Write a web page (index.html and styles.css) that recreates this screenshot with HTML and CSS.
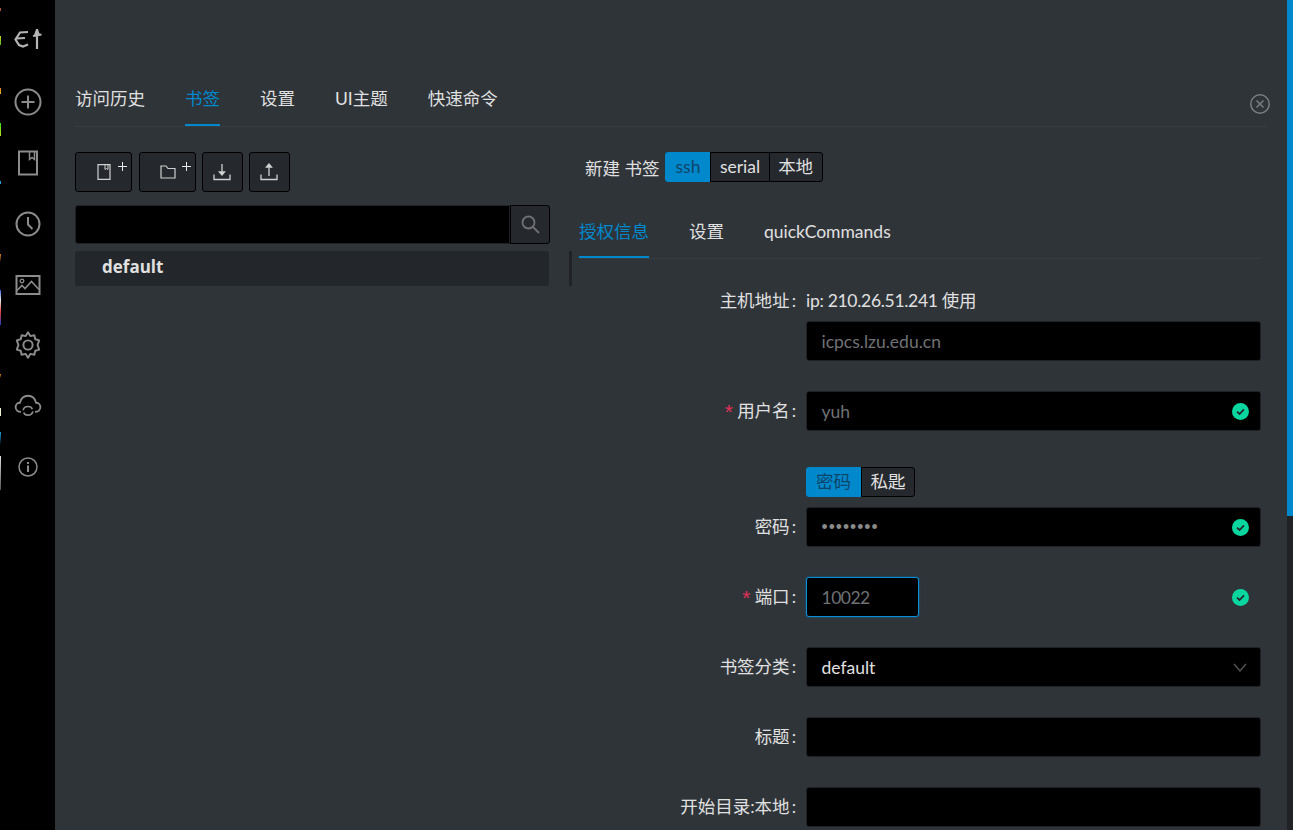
FILE: index.html
```html
<!DOCTYPE html>
<html lang="zh-CN">
<head>
    <meta charset="UTF-8">
    <title>electerm</title>
    <link rel="stylesheet" href="styles.css">
</head>
<body>
    <nav class="sidebar">
        <div class="side-item side-logo">
            <svg width="28" height="20" viewBox="0 0 28 20" fill="none" stroke="#b4b4b4" stroke-width="2.200"><path d="M14 3 6 3.500 1.500 10.500 5 16 9 17.500 14 15.500M2.500 9.500 11 9"/><path d="M23 0V20M19 7 27.500 5.500M23 1 21 6.500M23 1 25 6.500"/></svg>
        </div>
        <div class="side-item">
            <svg width="28" height="28" viewBox="0 0 28 28" fill="none" stroke="#8c8c8c" stroke-width="2"><circle cx="14" cy="14" r="12.500"/><path d="M14 7.500V20.500M7.500 14H20.500"/></svg>
        </div>
        <div class="side-item">
            <svg width="22" height="26" viewBox="0 0 22 26" fill="none" stroke="#8c8c8c" stroke-width="2"><path d="M2 1.500H20V24.500H2Z"/><path d="M12.500 1.500V9.500L15 7.500 17.500 9.500V1.500" stroke-width="1.500"/></svg>
        </div>
        <div class="side-item">
            <svg width="26" height="26" viewBox="0 0 26 26" fill="none" stroke="#8c8c8c" stroke-width="2"><circle cx="13" cy="13" r="11.500"/><path d="M13 6V13.500L17.500 18"/></svg>
        </div>
        <div class="side-item">
            <svg width="26" height="22" viewBox="0 0 26 22" fill="none" stroke="#8c8c8c" stroke-width="2"><path d="M1.500 2H24.500V20H1.500Z"/><circle cx="7" cy="7" r="1.800" stroke-width="1.300"/><path d="M2 16.500 7 11.500 10 14.500 16.500 7.500 24 15.500" stroke-width="1.600"/></svg>
        </div>
        <div class="side-item">
            <svg width="30" height="30" viewBox="0 0 26 26" fill="none" stroke="#8c8c8c" stroke-width="1.700"><path d="M13 2 15 5.300 18.500 4.500 19.300 8 22.700 9 21.300 13 22.700 17 19.300 18 18.500 21.500 15 20.700 13 24 11 20.700 7.500 21.500 6.700 18 3.300 17 4.700 13 3.300 9 6.700 8 7.500 4.500 11 5.300Z" stroke-linejoin="round"/><circle cx="13" cy="13" r="4"/></svg>
        </div>
        <div class="side-item">
            <svg width="28" height="24" viewBox="0 0 26 22" fill="none" stroke="#8c8c8c" stroke-width="1.700"><path d="M6.500 16.500C3.500 16.500 1.500 14.500 1.500 12 1.500 9.500 3.500 8 5.500 8 6.500 4 9.500 1.500 13 1.500 16.500 1.500 19.500 4 20.500 8 22.500 8 24.500 9.500 24.500 12 24.500 14.500 22.500 16.500 19.500 16.500"/><path d="M8.500 15C9 12.500 11 11.500 13 11.500 15 11.500 16.500 12.500 17 14M17.500 16C17 18.500 15 19.500 13 19.500 11 19.500 9.500 18.500 9 17" stroke-width="1.500"/></svg>
        </div>
        <div class="side-item">
            <svg width="20" height="20" viewBox="0 0 20 20" fill="none" stroke="#8c8c8c" stroke-width="1.500"><circle cx="10" cy="10" r="9"/><path d="M10 8.500V15" stroke-width="2"/><path d="M10 5V7" stroke-width="2"/></svg>
        </div>
    </nav>

    <main class="content">
        <header class="top-tabs">
            <a class="tab">访问历史</a>
            <a class="tab active">书签</a>
            <a class="tab">设置</a>
            <a class="tab">UI主题</a>
            <a class="tab">快速命令</a>
            <svg class="close-icon" width="20" height="20" viewBox="0 0 20 20" fill="none" stroke="#7a7d80" stroke-width="1.500"><circle cx="10" cy="10" r="9.200"/><path d="M6.500 6.500 13.500 13.500M13.500 6.500 6.500 13.500"/></svg>
        </header>

        <div class="panes">
            <section class="left-pane">
                <div class="tool-row">
                    <button class="tool-btn wide">
                        <svg class="btn-icon" width="14" height="16" viewBox="0 0 14 16" fill="none" stroke="#d0d0d0" stroke-width="1.200"><path d="M1 .6H13V15.400H1Z"/><path d="M8 .6V5.500L9.500 4.500 11 5.500V.6" stroke-width="1"/></svg>
                        <svg class="plus" width="9" height="9" viewBox="0 0 9 9" stroke="#e8e8e8" stroke-width="1"><path d="M4.500 0V9M0 4.500H9"/></svg>
                    </button>
                    <button class="tool-btn wide">
                        <svg class="btn-icon" width="16" height="14" viewBox="0 0 16 14" fill="none" stroke="#d0d0d0" stroke-width="1.200"><path d="M1 1H6L8 3.500H15V13H1Z"/></svg>
                        <svg class="plus" width="9" height="9" viewBox="0 0 9 9" stroke="#e8e8e8" stroke-width="1"><path d="M4.500 0V9M0 4.500H9"/></svg>
                    </button>
                    <button class="tool-btn">
                        <svg width="18" height="18" viewBox="0 0 18 18" fill="none" stroke="#d0d0d0" stroke-width="1.300"><path d="M9 1V11"/><path d="M6.500 9 9 12 11.500 9Z" fill="#d0d0d0"/><path d="M1 11.500V16.500H17V11.500"/></svg>
                    </button>
                    <button class="tool-btn">
                        <svg width="18" height="18" viewBox="0 0 18 18" fill="none" stroke="#d0d0d0" stroke-width="1.300"><path d="M9 3V13"/><path d="M6.500 4 9 1 11.500 4Z" fill="#d0d0d0"/><path d="M1 11.500V16.500H17V11.500"/></svg>
                    </button>
                </div>
                <div class="search-row">
                    <input class="search-input" type="text">
                    <button class="search-btn">
                        <svg width="19" height="19" viewBox="0 0 19 19" fill="none" stroke="#6e7073" stroke-width="1.800"><circle cx="7.500" cy="7.500" r="6"/><path d="M12 12 18 18"/></svg>
                    </button>
                </div>
                <div class="tree-row">
                    <div class="tree-item">default</div>
                    <div class="drag-handle"></div>
                </div>
            </section>

            <section class="right-pane">
                <div class="new-row">
                    <span class="new-label">新建 书签</span>
                    <div class="radio-group">
                        <span class="radio on">ssh</span>
                        <span class="radio">serial</span>
                        <span class="radio">本地</span>
                    </div>
                </div>

                <div class="sub-tabs">
                    <a class="tab active">授权信息</a>
                    <a class="tab">设置</a>
                    <a class="tab">quickCommands</a>
                </div>

                <form class="form">
                    <label class="form-label">主机地址<span class="colon">:</span></label>
                    <div class="form-control">
                        <div class="ip-line">ip: 210.26.51.241 使用</div>
                        <div class="field"><span class="placeholder">icpcs.lzu.edu.cn</span></div>
                    </div>

                    <label class="form-label"><i class="req">*</i>用户名<span class="colon">:</span></label>
                    <div class="form-control">
                        <div class="field"><span class="placeholder">yuh</span><svg class="check" viewBox="0 0 17 17"><circle cx="8.500" cy="8.500" r="8.500" fill="#0ad6a0"/><path d="M5 8.700 7.500 11 12 6.300" fill="none" stroke="#23262b" stroke-width="1.800"/></svg></div>
                    </div>

                    <div></div>
                    <div class="form-control auth-switch">
                        <div class="radio-group">
                            <span class="radio on">密码</span>
                            <span class="radio">私匙</span>
                        </div>
                    </div>

                    <label class="form-label">密码<span class="colon">:</span></label>
                    <div class="form-control">
                        <div class="field"><span class="placeholder dots">••••••••</span><svg class="check" viewBox="0 0 17 17"><circle cx="8.500" cy="8.500" r="8.500" fill="#0ad6a0"/><path d="M5 8.700 7.500 11 12 6.300" fill="none" stroke="#23262b" stroke-width="1.800"/></svg></div>
                    </div>

                    <label class="form-label"><i class="req">*</i>端口<span class="colon">:</span></label>
                    <div class="form-control port-line">
                        <div class="field port"><span class="placeholder">10022</span></div>
                        <svg class="check" viewBox="0 0 17 17"><circle cx="8.500" cy="8.500" r="8.500" fill="#0ad6a0"/><path d="M5 8.700 7.500 11 12 6.300" fill="none" stroke="#23262b" stroke-width="1.800"/></svg>
                    </div>

                    <label class="form-label">书签分类<span class="colon">:</span></label>
                    <div class="form-control">
                        <div class="field"><span class="value">default</span><svg class="arrow" width="14" height="9" viewBox="0 0 14 9" fill="none" stroke="#55585b" stroke-width="1.300"><path d="M1 1 7 8 13 1"/></svg></div>
                    </div>

                    <label class="form-label">标题<span class="colon">:</span></label>
                    <div class="form-control"><div class="field"></div></div>

                    <label class="form-label">开始目录:本地<span class="colon">:</span></label>
                    <div class="form-control"><div class="field"></div></div>
                </form>
            </section>
        </div>
    </main>

    <div class="scrollbar"><div class="thumb"></div></div>
</body>
</html>
```

FILE: styles.css
```css
html, body {
    margin: 0;
    padding: 0;
    width: 100%;
    height: 100%;
    overflow: hidden;
}

body {
    display: flex;
    background: #2f3439;
    color: #e0e0e0;
    font-family: "Lato", "Noto Sans CJK SC", sans-serif;
    font-size: 17.5px;
}

/* the 1px strip of stray colours down the window's left edge */
.sidebar {
    width: 55px;
    flex: none;
    background:
        linear-gradient(#000 8px, #a8553a 8px, #a8553a 11px, #000 11px,
            #000 36px, #c8d820 36px, #50c030 45px, #000 45px,
            #000 88px, #e08020 88px, #e0c020 94px, #000 94px,
            #000 123px, #30e020 123px, #c0e020 136px, #000 136px,
            #000 181px, #20a0e0 181px, #20a0e0 184px, #000 184px,
            #000 254px, #e08020 254px, #000 262px,
            #000 290px, #3060e0 290px, #f0f0f0 300px, #e04030 312px, #2040c0 325px, #000 325px,
            #000 374px, #e08020 374px, #000 378px,
            #000 408px, #f0f0d0 408px, #f0f0d0 416px, #000 416px,
            #000 432px, #20a0e0 432px, #000 445px,
            #000 456px, #e0e0e0 456px, #555 490px, #000 490px) 0 0 / 1px 100% no-repeat,
        #000;
    padding-top: 11px;
    box-sizing: border-box;
}

.side-item {
    height: 60.8px;
    box-sizing: border-box;
    display: flex;
    align-items: center;
    justify-content: center;
}

.side-logo {
    padding-bottom: 5px;
}

.content {
    flex: 1;
    min-width: 0;
    padding: 0 20px;
    box-sizing: border-box;
}

.scrollbar {
    width: 6px;
    flex: none;
    background: #202225;
}

.thumb {
    height: 516px;
    background: #0088cc;
}

a.tab {
    display: block;
    line-height: 24px;
    padding-bottom: 13px;
    border-bottom: 2px solid transparent;
}

a.tab.active {
    color: #0088cc;
    border-bottom-color: #0088cc;
}

.top-tabs {
    display: flex;
    gap: 40px;
    padding-top: 87px;
    padding-bottom: 0;
    border-bottom: 1px solid #373c41;
    position: relative;
}

.close-icon {
    position: absolute;
    right: -3px;
    top: 94px;
}

.panes {
    display: flex;
}

.left-pane {
    width: 497px;
    flex: none;
    padding-top: 25px;
}

.tool-row {
    display: flex;
    gap: 6.500px;
}

.tool-btn {
    width: 40.500px;
    height: 40px;
    padding: 0;
    background: #25282d;
    border: 1px solid #000;
    border-radius: 3px;
    position: relative;
    display: flex;
    align-items: center;
    justify-content: center;
}

.tool-btn.wide {
    width: 57px;
}

.btn-icon {
    margin-left: 1px;
}

.plus {
    position: absolute;
    right: 4px;
    top: 9px;
}

.search-row {
    display: flex;
    width: 475px;
    margin-top: 13px;
}

.search-input {
    flex: 1;
    min-width: 0;
    height: 39px;
    box-sizing: border-box;
    background: #000;
    border: 1px solid #1f2125;
    border-radius: 3px 0 0 3px;
}

.search-btn {
    width: 40px;
    height: 39px;
    padding: 0;
    background: #25282d;
    border: 1px solid #000;
    border-radius: 0 3px 3px 0;
    display: flex;
    align-items: center;
    justify-content: center;
}

.tree-row {
    display: flex;
    margin-top: 7px;
}

.tree-item {
    width: 474px;
    height: 35px;
    line-height: 31px;
    padding-left: 27px;
    box-sizing: border-box;
    background: #23262b;
    border-radius: 3px;
    font-family: "Open Sans", sans-serif;
    font-size: 17px;
    font-weight: 700;
}

.drag-handle {
    width: 3px;
    height: 35px;
    margin-left: 20px;
    background: #202226;
}

.right-pane {
    flex: 1;
    min-width: 0;
    margin-left: 7px;
    padding-top: 25px;
}

.new-row {
    display: flex;
    align-items: center;
    padding-left: 6px;
    gap: 6px;
}

.radio-group {
    display: inline-flex;
    height: 30px;
    box-sizing: border-box;
    border: 1px solid #000;
    border-radius: 3px;
    background: #25282d;
}

.radio {
    padding: 0 8.500px;
    line-height: 28px;
    border-left: 1px solid #000;
}

.radio:first-child {
    border-left: none;
}

.radio.on {
    background: #0088cc;
    color: #10456a;
    margin: -1px 0 -1px -1px;
    padding: 1px 10px;
    border-radius: 3px 0 0 3px;
}

.sub-tabs {
    display: flex;
    gap: 40px;
    margin-top: 38px;
    border-bottom: 1px solid #373c41;
    margin-right: 6px;
}

.sub-tabs a.tab {
    padding-bottom: 12px;
}

.form {
    display: grid;
    grid-template-columns: 227px 1fr;
    margin-top: 22px;
    margin-right: 6px;
}

.form-label {
    height: 40px;
    line-height: 40px;
    text-align: right;
    white-space: nowrap;
}

.colon {
    margin: 0 10px 0 2px;
}

.req {
    color: #e0305a;
    font-style: normal;
    font-family: "Liberation Mono", monospace;
    font-size: 21px;
    line-height: 1;
    vertical-align: -3px;
    margin-right: 2px;
}

.form-control {
    margin-bottom: 30px;
    min-width: 0;
}

.ip-line {
    line-height: 40px;
    height: 40px;
    letter-spacing: -.3px;
}

.field {
    height: 40px;
    box-sizing: border-box;
    background: #000;
    border: 1px solid #1f2125;
    border-radius: 3px;
    padding: 0 14.500px;
    display: flex;
    align-items: center;
    justify-content: space-between;
}

.placeholder {
    color: #6f7275;
}

.port .placeholder {
    letter-spacing: -.5px;
}

.dots {
    font-family: "Liberation Sans", sans-serif;
    letter-spacing: 1px;
    color: #8a8a8a;
}

.value {
    color: #e0e0e0;
}

.check {
    width: 17px;
    height: 17px;
    margin-right: -3px;
    flex: none;
}

.auth-switch {
    margin-top: 6px;
    margin-bottom: 10px;
}

.port-line {
    display: flex;
    align-items: center;
    justify-content: space-between;
    padding-right: 15px;
}

.port {
    width: 113px;
    border-color: #0a8fd6;
    box-shadow: 0 0 2px #0a6fa8;
}

.arrow {
    flex: none;
    margin-right: -1px;
}
```
